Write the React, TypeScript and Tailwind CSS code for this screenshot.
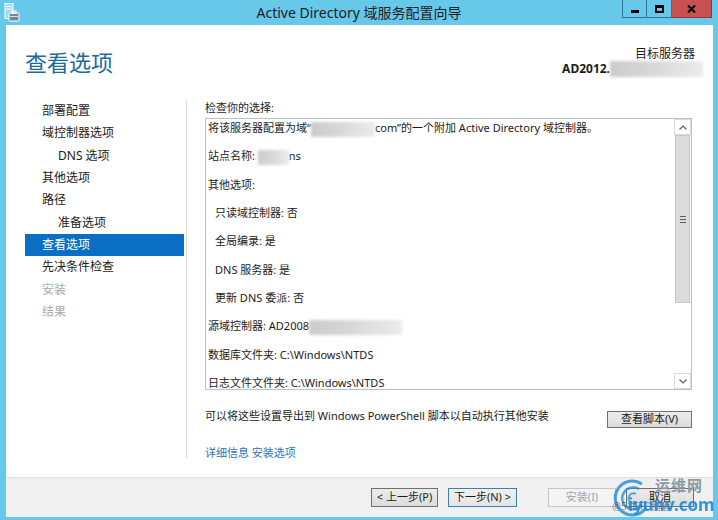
import React from 'react'

const font = "font-['Noto_Sans','Noto_Sans_CJK_SC',sans-serif]"

function Blur({ w, h = 15 }: { w: number; h?: number }) {
  return (
    <span
      className="inline-block align-middle bg-gradient-to-r from-[#cbcbcb] via-[#d9d9d9] to-[#ececec] blur-[1.5px]"
      style={{ width: w, height: h }}
    />
  )
}

function AppIcon() {
  return (
    <svg width="16" height="19" viewBox="0 0 16 19">
      <rect x="1" y="0.5" width="8" height="15" fill="#9fd9f3" stroke="#ffffff" />
      <rect x="2.5" y="3" width="5" height="1" fill="#ffffff" />
      <rect x="2.5" y="5.5" width="5" height="1" fill="#ffffff" />
      <rect x="5" y="10" width="10" height="8" rx="1" fill="#6f8799" stroke="#ffffff" />
      <rect x="8" y="8" width="4" height="2.5" fill="none" stroke="#ffffff" />
      <rect x="6" y="13" width="8" height="1" fill="#d5e3ec" />
    </svg>
  )
}

function TitleBar() {
  return (
    <div className="relative h-[25px] shrink-0 flex items-start">
      <div className="absolute left-[4px] top-[3px]">
        <AppIcon />
      </div>
      <div className="flex-1 text-center text-[14px] leading-[25px] text-[#1d1d1d]">
        Active Directory 域服务配置向导
      </div>
      <div className="absolute right-[6px] top-0 flex">
        <div className="w-[25px] h-[18px] border border-[#2f7493] border-t-0 flex items-end justify-center pb-[4px]">
          <div className="w-[8px] h-[3px] bg-black" />
        </div>
        <div className="w-[25px] h-[18px] border border-l-0 border-[#2f7493] border-t-0 flex items-center justify-center">
          <div className="w-[9px] h-[8px] border-2 border-black border-t-[3px]" />
        </div>
        <div className="w-[40px] h-[18px] bg-[#c75050] border border-l-0 border-t-0 border-[#8f3a3a] flex items-center justify-center">
          <svg width="9" height="8" viewBox="0 0 9 8">
            <path d="M1 0.5 L8 7.5 M8 0.5 L1 7.5" stroke="#000" strokeWidth="2" />
          </svg>
        </div>
      </div>
    </div>
  )
}

const nav = [
  { t: '部署配置' },
  { t: '域控制器选项' },
  { t: 'DNS 选项', sub: true },
  { t: '其他选项' },
  { t: '路径' },
  { t: '准备选项', sub: true },
  { t: '查看选项', active: true },
  { t: '先决条件检查' },
  { t: '安装', off: true },
  { t: '结果', off: true },
]

function Scrollbar() {
  return (
    <div className="w-[17px] shrink-0 flex flex-col bg-white">
      <div className="h-[16px] border border-[#d9d9d9] flex items-center justify-center">
        <svg width="8" height="5" viewBox="0 0 8 5">
          <path d="M0.5 4.5 L4 1 L7.5 4.5" fill="none" stroke="#606060" strokeWidth="1.2" />
        </svg>
      </div>
      <div className="h-[168px] mx-[1px] bg-[#dcdcdc] border border-[#c9c9c9] flex items-center justify-center">
        <div className="flex flex-col gap-[2px]">
          <div className="w-[6px] h-px bg-[#606060]" />
          <div className="w-[6px] h-px bg-[#606060]" />
          <div className="w-[6px] h-px bg-[#606060]" />
        </div>
      </div>
      <div className="flex-1" />
      <div className="h-[16px] border border-[#d9d9d9] flex items-center justify-center">
        <svg width="8" height="5" viewBox="0 0 8 5">
          <path d="M0.5 0.5 L4 4 L7.5 0.5" fill="none" stroke="#606060" strokeWidth="1.2" />
        </svg>
      </div>
    </div>
  )
}

function Line({ children, indent }: { children: React.ReactNode; indent?: boolean }) {
  return (
    <div className={`h-[17px] leading-[17px] whitespace-nowrap ${indent ? 'pl-[9px]' : 'pl-[2px]'}`}>
      {children}
    </div>
  )
}

function Btn({ children, w, primary, off }: { children: React.ReactNode; w: number; primary?: boolean; off?: boolean }) {
  const cls = off
    ? 'border-[#c6c6c6] bg-[#f4f4f4] text-[#a3a3a3]'
    : primary
      ? 'border-[#3c7fb1] bg-gradient-to-b from-[#f0f0f0] to-[#e5e5e5] text-[#1b1b1b]'
      : 'border-[#707070] bg-gradient-to-b from-[#ececec] to-[#dcdcdc] text-[#1b1b1b]'
  return (
    <div
      className={`h-[19px] border flex items-center justify-center text-[11px] ${cls}`}
      style={{ width: w }}
    >
      {children}
    </div>
  )
}

// 图片水印（覆盖在底部按钮上）
function Watermark() {
  return (
    <div className="absolute left-[608px] top-[476px] w-[104px] h-[42px] pointer-events-none">
      <svg className="absolute left-[4px] top-[2px]" width="40" height="40" viewBox="0 0 40 40">
        <path d="M30 6 A17 17 0 1 0 34 30" fill="none" stroke="#2b8fd8" strokeWidth="3" opacity="0.85" />
        <path d="M27 11 A11 11 0 1 0 30 27" fill="none" stroke="#2b8fd8" strokeWidth="2.5" opacity="0.8" />
        <path d="M24 16 A5 5 0 1 0 25 24" fill="none" stroke="#2b8fd8" strokeWidth="2" opacity="0.75" />
      </svg>
      <div className="absolute left-[47px] top-[1px] text-[15px] leading-[17px] text-[#8e9aa3] font-bold tracking-[1px]">运维网</div>
      <div className="absolute left-[4px] top-[24px] text-[10px] leading-[12px] text-[#333] opacity-50 whitespace-nowrap">@51CTO博客</div>
      <div className="absolute left-[20px] top-[19px] text-[17px] leading-[20px] text-[#1f8be0] font-bold opacity-90 whitespace-nowrap">iyunv.com</div>
    </div>
  )
}

export default function App() {
  return (
    <div className={`relative w-[718px] h-[520px] bg-[#68c8e9] flex flex-col overflow-hidden ${font}`}>
      <TitleBar />
      <div className="flex-1 ml-[6px] mr-[5px] mb-[3px] bg-white flex flex-col">
        {/* 标题区 */}
        <div className="h-[75px] shrink-0 flex justify-between">
          <div className="pl-[19px] pt-[24px] text-[22px] leading-[26px] text-[#1c6a98]">查看选项</div>
          <div className="pr-[18px] pt-[22px] flex flex-col items-end text-[12px] leading-[14px] text-[#1b1b1b]">
            <div>目标服务器</div>
            <div className="flex items-center mr-[-8px]">
              <span className="font-bold">AD2012.</span>
              <Blur w={93} h={16} />
            </div>
          </div>
        </div>

        {/* 主体 */}
        <div className="flex-1 flex">
          <div className="pl-[19px] w-[178px] shrink-0 flex flex-col text-[12px]">
            {nav.map((n) => (
              <div
                key={n.t}
                className={`h-[22.33px] leading-[22.33px] ${n.sub ? 'pl-[33px]' : 'pl-[17px]'} ${
                  n.active ? 'bg-[#0a6fc2] text-white' : n.off ? 'text-[#ababab]' : 'text-[#1b1b1b]'
                }`}
              >
                {n.t}
              </div>
            ))}
          </div>
          <div className="ml-[2px] w-px h-[358px] bg-[#dadada]" />
          <div className="pl-[18px] w-[505px] flex flex-col text-[11px] text-[#1b1b1b]">
            <div className="h-[16px] leading-[16px]">检查你的选择:</div>
            <div className="mt-[2px] h-[272px] border border-[#b5c2d1] flex overflow-hidden">
              <div className="flex-1 flex flex-col gap-[11.33px] overflow-hidden">
                <Line>
                  将该服务器配置为域“<Blur w={64} />com”的一个附加 Active Directory 域控制器。
                </Line>
                <Line>
                  站点名称: <Blur w={31} />ns
                </Line>
                <Line>其他选项:</Line>
                <Line indent>只读域控制器: 否</Line>
                <Line indent>全局编录: 是</Line>
                <Line indent>DNS 服务器: 是</Line>
                <Line indent>更新 DNS 委派: 否</Line>
                <Line>
                  源域控制器: AD2008<Blur w={93} />
                </Line>
                <Line>数据库文件夹: C:\Windows\NTDS</Line>
                <Line>日志文件文件夹: C:\Windows\NTDS</Line>
              </div>
              <Scrollbar />
            </div>
            <div className="mt-[18px] flex justify-between items-start">
              <div className="h-[16px] leading-[16px]">可以将这些设置导出到 Windows PowerShell 脚本以自动执行其他安装</div>
              <div className="mt-[3px] w-[85px] h-[17px] border border-[#707070] bg-gradient-to-b from-[#ececec] to-[#dcdcdc] flex items-center justify-center">
                查看脚本(V)
              </div>
            </div>
            <div className="mt-[17px] h-[16px] leading-[16px] text-[#2e75b6]">详细信息 安装选项</div>
          </div>
        </div>

        {/* 底部按钮 */}
        <div className="h-[40px] shrink-0 border-t border-[#dfdfdf] bg-[#f0f0f0] flex justify-end items-start pt-[10px] pr-[19px]">
          <Btn w={67}>&lt; 上一步(P)</Btn>
          <div className="w-[10px]" />
          <Btn w={69} primary>下一步(N) &gt;</Btn>
          <div className="w-[31px]" />
          <Btn w={68} off>安装(I)</Btn>
          <div className="w-[10px]" />
          <Btn w={68}>取消</Btn>
        </div>
      </div>
      <Watermark />
    </div>
  )
}
